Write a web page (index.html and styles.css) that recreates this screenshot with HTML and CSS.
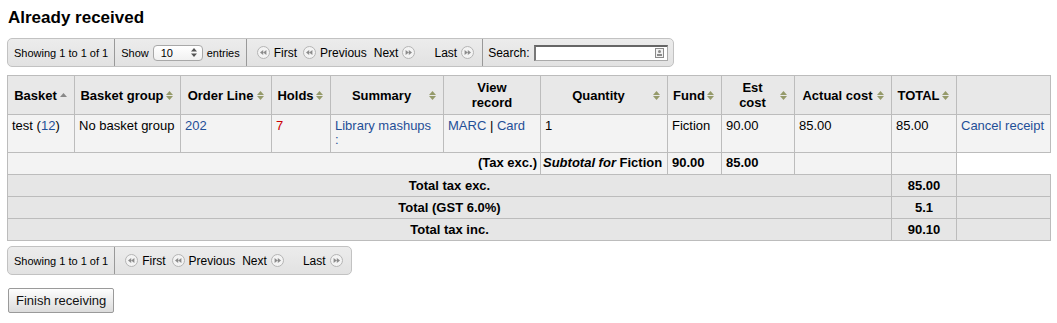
FILE: index.html
```html
<!DOCTYPE html>
<html lang="en">

<head>
    <meta charset="UTF-8">
    <meta name="viewport" content="width=device-width, initial-scale=1.0">
    <title>Already received</title>
    <link rel="stylesheet" href="styles.css">
</head>

<body>
    <div class="page">
        <h1>Already received</h1>

        <div class="toolbar">
            <div class="tool-section">Showing 1 to 1 of 1</div>
            <div class="tool-section">
                Show
                <span class="select">10 <svg width="6" height="9" viewBox="0 0 6 9"><path d="M3 0 L6 3.5 H0 Z M3 9 L6 5.5 H0 Z" fill="#555"/></svg></span>
                entries
            </div>
            <div class="tool-section paging">
                <span class="page-btn"><svg class="pg-icon" width="13" height="13" viewBox="0 0 13 13"><circle cx="6.5" cy="6.5" r="6" fill="#f3f3f3" stroke="#b4b4b4"/><path d="M3 6.5 L6.2 4 V9 Z M6.2 6.5 L9.4 4 V9 Z" fill="#8c8c8c"/></svg>First</span>
                <span class="page-btn"><svg class="pg-icon" width="13" height="13" viewBox="0 0 13 13"><circle cx="6.5" cy="6.5" r="6" fill="#f3f3f3" stroke="#b4b4b4"/><path d="M3 6.5 L6.2 4 V9 Z M6.2 6.5 L9.4 4 V9 Z" fill="#8c8c8c"/></svg>Previous</span>
                <span class="page-btn">Next<svg class="pg-icon" width="13" height="13" viewBox="0 0 13 13"><circle cx="6.5" cy="6.5" r="6" fill="#f3f3f3" stroke="#b4b4b4"/><path d="M10 6.5 L6.8 4 V9 Z M6.8 6.5 L3.6 4 V9 Z" fill="#8c8c8c"/></svg></span>
                <span class="page-btn last">Last<svg class="pg-icon" width="13" height="13" viewBox="0 0 13 13"><circle cx="6.5" cy="6.5" r="6" fill="#f3f3f3" stroke="#b4b4b4"/><path d="M10 6.5 L6.8 4 V9 Z M6.8 6.5 L3.6 4 V9 Z" fill="#8c8c8c"/></svg></span>
            </div>
            <div class="tool-section search-section">
                Search:
                <span class="search">
                    <input type="text" class="search-input">
                    <svg class="search-icon" width="9" height="10" viewBox="0 0 9 10"><rect x="0.5" y="0.5" width="8" height="9" fill="#f2f2f2" stroke="#8a8a8a"/><circle cx="4.5" cy="3.6" r="1.5" fill="#8a8a8a"/><rect x="2" y="6" width="5" height="2" fill="#8a8a8a"/></svg>
                </span>
            </div>
        </div>

        <table class="received">
            <colgroup>
                <col style="width:67px">
                <col style="width:106px">
                <col style="width:91px">
                <col style="width:59px">
                <col style="width:113px">
                <col style="width:97px">
                <col style="width:127px">
                <col style="width:54px">
                <col style="width:73px">
                <col style="width:97px">
                <col style="width:65px">
                <col style="width:94px">
            </colgroup>
            <thead>
                <tr>
                    <th class="sorting-asc">Basket</th>
                    <th class="sorting">Basket group</th>
                    <th class="sorting">Order Line</th>
                    <th class="sorting">Holds</th>
                    <th class="sorting">Summary</th>
                    <th class="plain">View<br>record</th>
                    <th class="sorting">Quantity</th>
                    <th class="sorting">Fund</th>
                    <th class="sorting">Est<br>cost</th>
                    <th class="sorting">Actual cost</th>
                    <th class="sorting">TOTAL</th>
                    <th class="plain"></th>
                </tr>
            </thead>
            <tbody>
                <tr class="line">
                    <td>test (<a href="#">12</a>)</td>
                    <td>No basket group</td>
                    <td><a href="#">202</a></td>
                    <td><a href="#" class="holds">7</a></td>
                    <td><a href="#">Library mashups<br>:</a></td>
                    <td><a href="#">MARC</a> | <a href="#">Card</a></td>
                    <td>1</td>
                    <td>Fiction</td>
                    <td>90.00</td>
                    <td>85.00</td>
                    <td>85.00</td>
                    <td><a href="#">Cancel receipt</a></td>
                </tr>
                <tr class="subtotal">
                    <th colspan="6" class="right">(Tax exc.)</th>
                    <td class="tight"><b><i>Subtotal for</i> Fiction</b></td>
                    <td><b>90.00</b></td>
                    <td><b>85.00</b></td>
                    <td></td>
                    <td></td>
                </tr>
            </tbody>
            <tfoot>
                <tr>
                    <th colspan="10">Total tax exc.</th>
                    <th>85.00</th>
                    <th></th>
                </tr>
                <tr>
                    <th colspan="10">Total (GST 6.0%)</th>
                    <th>5.1</th>
                    <th></th>
                </tr>
                <tr>
                    <th colspan="10">Total tax inc.</th>
                    <th>90.10</th>
                    <th></th>
                </tr>
            </tfoot>
        </table>

        <div class="toolbar bottom">
            <div class="tool-section">Showing 1 to 1 of 1</div>
            <div class="tool-section paging">
                <span class="page-btn"><svg class="pg-icon" width="13" height="13" viewBox="0 0 13 13"><circle cx="6.5" cy="6.5" r="6" fill="#f3f3f3" stroke="#b4b4b4"/><path d="M3 6.5 L6.2 4 V9 Z M6.2 6.5 L9.4 4 V9 Z" fill="#8c8c8c"/></svg>First</span>
                <span class="page-btn"><svg class="pg-icon" width="13" height="13" viewBox="0 0 13 13"><circle cx="6.5" cy="6.5" r="6" fill="#f3f3f3" stroke="#b4b4b4"/><path d="M3 6.5 L6.2 4 V9 Z M6.2 6.5 L9.4 4 V9 Z" fill="#8c8c8c"/></svg>Previous</span>
                <span class="page-btn">Next<svg class="pg-icon" width="13" height="13" viewBox="0 0 13 13"><circle cx="6.5" cy="6.5" r="6" fill="#f3f3f3" stroke="#b4b4b4"/><path d="M10 6.5 L6.8 4 V9 Z M6.8 6.5 L3.6 4 V9 Z" fill="#8c8c8c"/></svg></span>
                <span class="page-btn last">Last<svg class="pg-icon" width="13" height="13" viewBox="0 0 13 13"><circle cx="6.5" cy="6.5" r="6" fill="#f3f3f3" stroke="#b4b4b4"/><path d="M10 6.5 L6.8 4 V9 Z M6.8 6.5 L3.6 4 V9 Z" fill="#8c8c8c"/></svg></span>
            </div>
        </div>

        <button class="finish">Finish receiving</button>
    </div>
</body>

</html>
```

FILE: styles.css
```css
body {
    margin: 0;
    font-family: "Liberation Sans", Arial, sans-serif;
    font-size: 13px;
    color: #000;
    background: #fff;
}

.page {
    padding: 8px 7px;
}

h1 {
    font-size: 17px;
    font-weight: bold;
    margin: 0 0 10px 1px;
    line-height: 20px;
}

a {
    color: #1f4f97;
    text-decoration: none;
}

a.holds {
    color: #c00;
}

/* toolbars */

.toolbar {
    display: flex;
    width: fit-content;
    height: 27px;
    font-size: 11px;
    background: linear-gradient(#ececec, #e2e2e2);
    border: 1px solid #c2c2c2;
    border-radius: 5px;
}

.tool-section {
    display: flex;
    align-items: center;
    gap: 4px;
    padding: 0 6px;
    border-right: 1px solid #999;
    white-space: nowrap;
}

.tool-section:last-child {
    border-right: none;
}

.select {
    display: inline-flex;
    align-items: center;
    justify-content: space-between;
    width: 36px;
    height: 14px;
    padding: 0 5px 0 7px;
    font-size: 11px;
    background: linear-gradient(#fff, #f1f1f1);
    border: 1px solid #a8a8a8;
    border-radius: 4px;
}

.paging {
    gap: 0;
    padding: 0 8px 0 10px;
    font-size: 12px;
}

.page-btn {
    display: inline-flex;
    align-items: center;
    gap: 4px;
    margin-right: 6px;
}

.page-btn:nth-child(2) {
    margin-right: 7px;
}

.page-btn.last {
    margin-left: 13px;
    margin-right: 0;
}

.search-section {
    font-size: 12px;
    padding-left: 5px;
    padding-right: 5px;
}

.search {
    position: relative;
    display: inline-block;
    height: 16px;
}

.search-input {
    display: block;
    width: 134px;
    height: 16px;
    margin: 0;
    padding: 0;
    box-sizing: border-box;
    border: 1px solid #aaa;
    border-top: 2px solid #666;
    border-left: 2px solid #777;
}

.search-icon {
    position: absolute;
    right: 4px;
    top: 3px;
}

/* table */

.received {
    border-collapse: collapse;
    table-layout: fixed;
    width: 1043px;
    margin-top: 8px;
    line-height: 14px;
}

.received th,
.received td {
    border: 1px solid #bcbcbc;
    padding: 4px 3px 4px 4px;
    vertical-align: top;
    text-align: left;
}

.received thead th {
    background: #e8e8e8;
    text-align: center;
    vertical-align: middle;
    padding: 4px 16px 4px 5px;
    line-height: 15px;
    white-space: nowrap;
}

.received thead th.plain {
    padding-right: 5px;
}

.received th.sorting {
    background: #e8e8e8 url("data:image/svg+xml,%3Csvg xmlns='http://www.w3.org/2000/svg' width='7' height='9'%3E%3Cpath d='M3.5 0 L7 4 H0 Z M3.5 9 L7 5 H0 Z' fill='%23959a6a'/%3E%3C/svg%3E") no-repeat right 7px center;
}

.received th.sorting-asc {
    background: #e8e8e8 url("data:image/svg+xml,%3Csvg xmlns='http://www.w3.org/2000/svg' width='7' height='9'%3E%3Cpath d='M3.5 2 L7 6 H0 Z' fill='%23888'/%3E%3C/svg%3E") no-repeat right 7px center;
}

.received tbody td {
    background: #f3f3f3;
    white-space: nowrap;
}

.received tr.line td {
    padding-bottom: 5px;
}

.received tr.subtotal th,
.received tr.subtotal td {
    background: #f3f3f3;
    padding: 3px 3px 4px 4px;
}

.received tr.subtotal td.tight {
    padding-left: 2px;
    padding-right: 1px;
}

.received tr.subtotal th.right {
    text-align: right;
}

.received tfoot th {
    background: #e6e6e6;
    text-align: center;
    padding: 4px 5px 3px;
}

/* bottom */

.toolbar.bottom {
    margin-top: 5px;
}

.finish {
    display: block;
    margin: 13px 0 0 1px;
    height: 25px;
    padding: 0 7px;
    font-family: "Liberation Sans", Arial, sans-serif;
    font-size: 13px;
    color: #111;
    background: linear-gradient(#fdfdfd, #dcdcdc);
    border: 1px solid #9a9a9a;
    border-radius: 2px;
}
```
